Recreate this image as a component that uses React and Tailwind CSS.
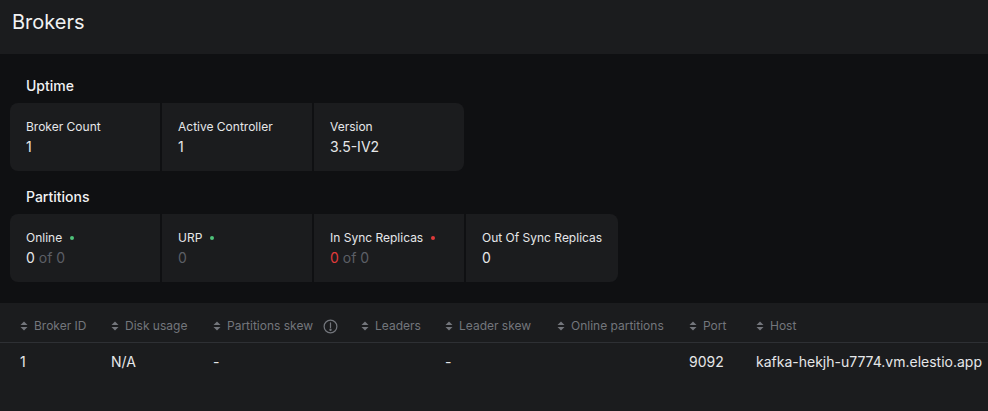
import React from "react";

const SortIcon = () => (
  <svg width="8" height="10" viewBox="0 0 8 10" className="shrink-0" fill="#73767c">
    <path d="M4 0.5 L7.5 4 L0.5 4 Z" />
    <path d="M4 9.5 L7.5 6 L0.5 6 Z" />
  </svg>
);

const InfoIcon = () => (
  <svg width="15" height="15" viewBox="0 0 16 16" fill="none" stroke="#73767c" strokeWidth="1.3">
    <circle cx="8" cy="8" r="6.8" />
    <line x1="8" y1="4.2" x2="8" y2="9" strokeLinecap="round" />
    <circle cx="8" cy="11.5" r="0.6" fill="#73767c" />
  </svg>
);

const Card = ({ label, dot, children, first, last }) => (
  <div
    className={`min-w-[150px] bg-[#1b1c1e] px-4 pt-4 pb-[14px] ${first ? "rounded-l-lg" : ""} ${last ? "rounded-r-lg" : ""}`}
  >
    <div className="flex items-center h-4 text-[12px] leading-4 text-[#e6e7e9]">
      <span>{label}</span>
      {dot && <span className={`ml-[8px] w-[4px] h-[4px] rounded-full ${dot}`} />}
    </div>
    <div className="mt-[2px] text-[14px] leading-5 text-[#e6e7e9] whitespace-nowrap">{children}</div>
  </div>
);

const cols = [
  { name: "Broker ID", w: "w-[111px]" },
  { name: "Disk usage", w: "w-[102px]" },
  { name: "Partitions skew", w: "w-[148px]", info: true },
  { name: "Leaders", w: "w-[84px]" },
  { name: "Leader skew", w: "w-[112px]" },
  { name: "Online partitions", w: "w-[132px]" },
  { name: "Port", w: "w-[67px]" },
  { name: "Host", w: "" },
];

const row = ["1", "N/A", "-", "", "-", "", "9092", "kafka-hekjh-u7774.vm.elestio.app"];

export default function App() {
  return (
    <div
      className="w-[988px] h-[411px] overflow-hidden bg-[#0f1012] text-white"
      style={{ fontFamily: "Inter, 'Noto Sans', sans-serif" }}
    >
      <div className="h-[54px] bg-[#1b1c1e] px-3 pt-[8px]">
        <h1 className="text-[20px] leading-7 font-normal text-[#f1f2f3]">Brokers</h1>
      </div>
      <div className="px-[10px] pt-[22px] pb-[21px]">
        <div className="pl-4 text-[14px] leading-5 font-medium text-[#f1f2f3]">Uptime</div>
        <div className="mt-[7px] flex gap-[2px]">
          <Card label="Broker Count" first>1</Card>
          <Card label="Active Controller">1</Card>
          <Card label="Version" last>3.5-IV2</Card>
        </div>
        <div className="mt-4 pl-4 text-[14px] leading-5 font-medium text-[#f1f2f3]">Partitions</div>
        <div className="mt-[7px] flex gap-[2px]">
          <Card label="Online" dot="bg-[#4ec27a]" first>
            <span>0</span>
            <span className="text-[#5c5f66]"> of 0</span>
          </Card>
          <Card label="URP" dot="bg-[#4ec27a]">
            <span className="text-[#5c5f66]">0</span>
          </Card>
          <Card label="In Sync Replicas" dot="bg-[#e03a3a]">
            <span className="text-[#e03a3a]">0</span>
            <span className="text-[#5c5f66]"> of 0</span>
          </Card>
          <Card label="Out Of Sync Replicas" last>0</Card>
        </div>
      </div>
      <div className="bg-[#1b1c1e] h-[108px]">
        <table className="w-full border-collapse table-fixed">
          <thead>
            <tr className="border-b border-[#2e3034]">
              {cols.map((c, i) => (
                <th
                  key={c.name}
                  className={`${c.w} ${i === 0 ? "pl-5" : ""} pt-[15px] pb-[8px] text-left font-normal`}
                >
                  <div className="flex items-center gap-[6px] text-[12px] leading-4 text-[#73767c] whitespace-nowrap">
                    <SortIcon />
                    <span>{c.name}</span>
                    {c.info && <span className="ml-[4px] flex"><InfoIcon /></span>}
                  </div>
                </th>
              ))}
            </tr>
          </thead>
          <tbody>
            <tr>
              {row.map((v, i) => (
                <td
                  key={i}
                  className={`${i === 0 ? "pl-5" : ""} pt-[9px] pb-[9px] text-[14px] leading-5 text-[#e6e7e9] whitespace-nowrap`}
                >
                  {v}
                </td>
              ))}
            </tr>
          </tbody>
        </table>
      </div>
    </div>
  );
}
